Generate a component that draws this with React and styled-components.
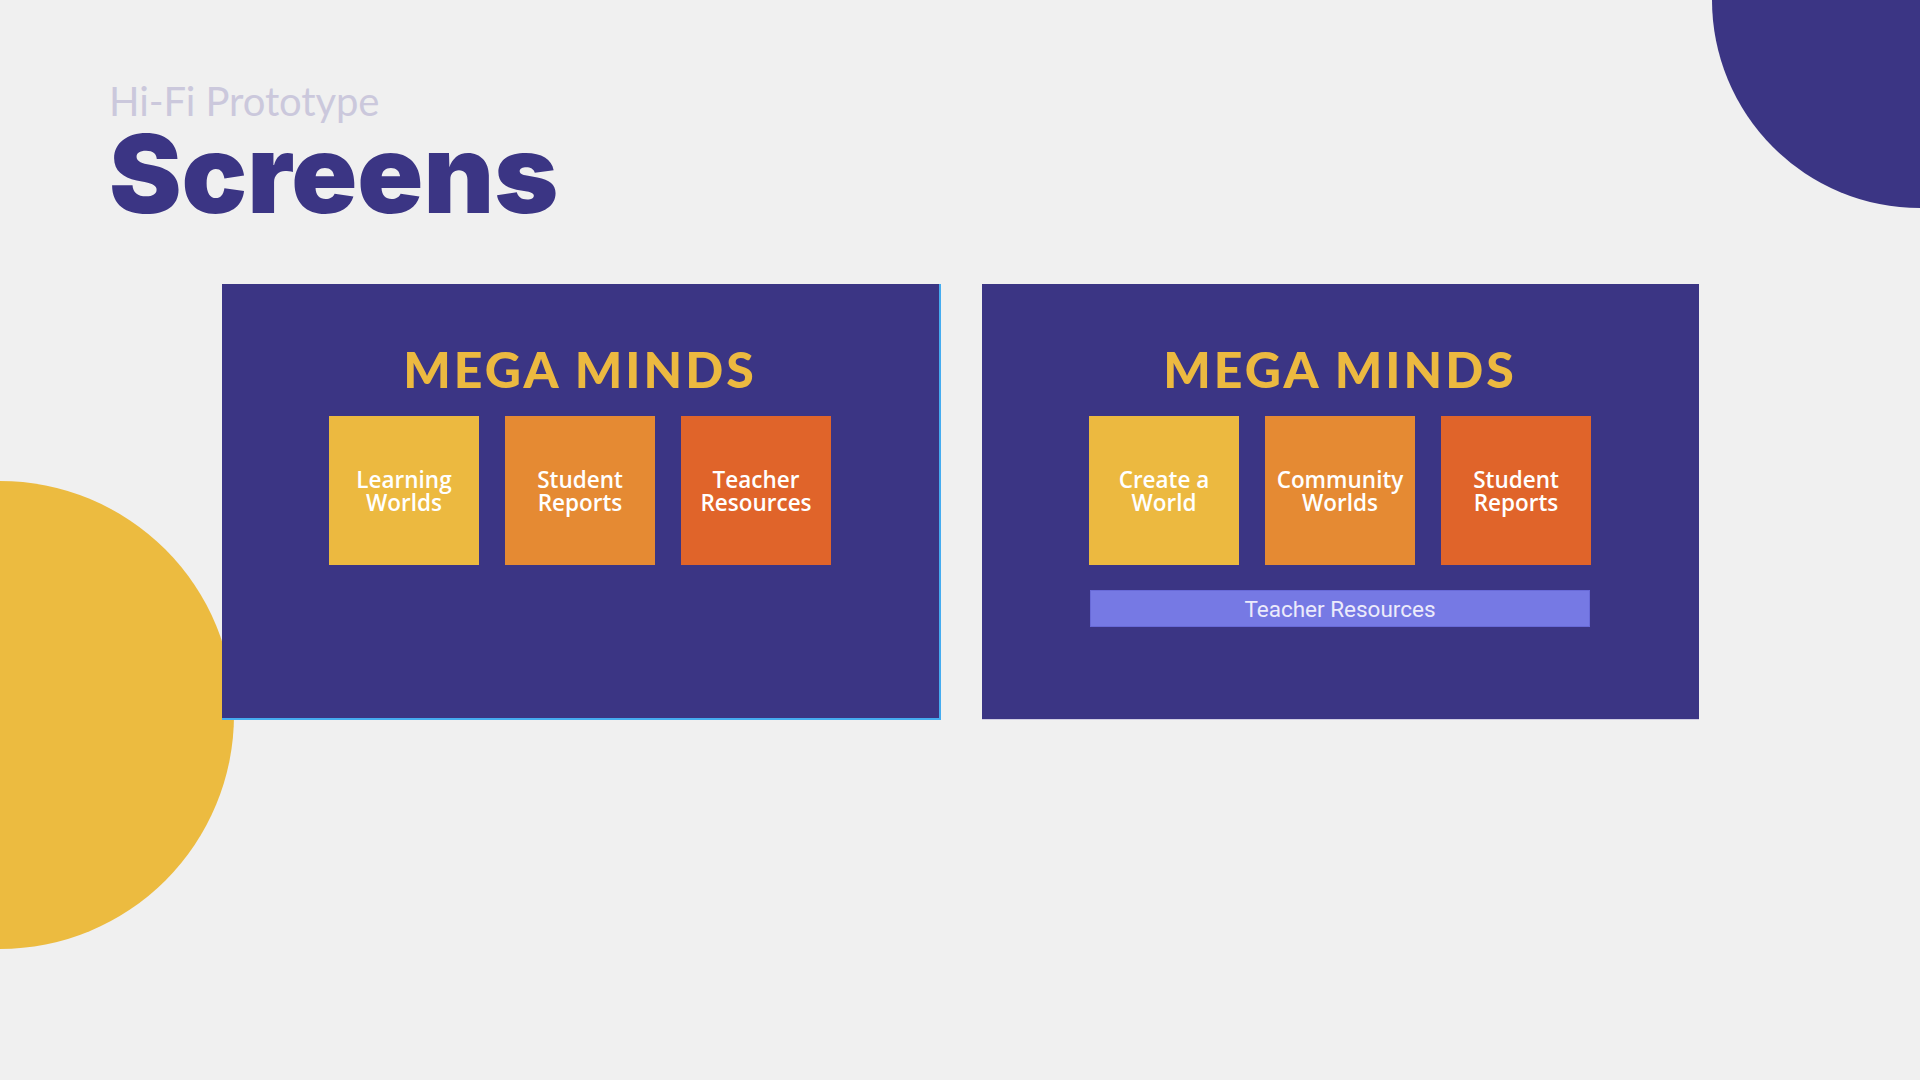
import React from "react"
import styled, { createGlobalStyle } from "styled-components"

const GlobalStyle = createGlobalStyle`
  html, body {
    margin: 0;
    padding: 0;
    background: #f0f0f0;
  }
`

const screens = [
  {
    tiles: [
      { label: "Learning Worlds", lines: ["Learning", "Worlds"] },
      { label: "Student Reports", lines: ["Student", "Reports"] },
      { label: "Teacher Resources", lines: ["Teacher", "Resources"] },
    ],
    selected: true,
  },
  {
    tiles: [
      { label: "Create a World", lines: ["Create a", "World"] },
      { label: "Community Worlds", lines: ["Community", "Worlds"] },
      { label: "Student Reports", lines: ["Student", "Reports"] },
    ],
    bar: "Teacher Resources",
  },
]

const tileColors = ["#ecb940", "#e58a33", "#e0642a"]

const App = () => {
  return (
    <>
      <GlobalStyle />
      <Page>
        <YellowBlob />
        <PurpleBlob />
        <Header>
          <Kicker>Hi-Fi Prototype</Kicker>
          <Title>Screens</Title>
        </Header>
        <CardRow>
          {screens.map((screen, i) => (
            <Card key={i} selected={screen.selected}>
              <Brand>MEGA MINDS</Brand>
              <TileRow>
                {screen.tiles.map((tile, j) => (
                  <Tile key={tile.label} color={tileColors[j]}>
                    {tile.lines.map(line => (
                      <span key={line}>{line}</span>
                    ))}
                  </Tile>
                ))}
              </TileRow>
              {screen.bar && <ResourceBar>{screen.bar}</ResourceBar>}
            </Card>
          ))}
        </CardRow>
      </Page>
    </>
  )
}

export default App

const Page = styled.div`
  position: relative;
  width: 1920px;
  height: 1080px;
  overflow: hidden;
  background: #f0f0f0;
`

const YellowBlob = styled.div`
  position: absolute;
  left: -234px;
  top: 481px;
  width: 468px;
  height: 468px;
  border-radius: 50%;
  background: #ecbb40;
`

const PurpleBlob = styled.div`
  position: absolute;
  left: 1712px;
  top: -208px;
  width: 416px;
  height: 416px;
  border-radius: 50%;
  background: #3b3584;
`

const Header = styled.div`
  position: relative;
  padding: 81px 0 0 109px;
`

const Kicker = styled.div`
  font-family: Lato, sans-serif;
  font-weight: 400;
  font-size: 40px;
  line-height: 40px;
  letter-spacing: -0.1px;
  color: #cbc8dc;
`

const Title = styled.h1`
  margin: 7px 0 0;
  font-family: Inter, sans-serif;
  font-weight: 900;
  font-size: 109px;
  line-height: 90px;
  letter-spacing: 0;
  color: #3b3584;
`

const CardRow = styled.div`
  position: relative;
  display: flex;
  justify-content: center;
  gap: 41px;
  margin-top: 66px;
`

const Card = styled.div`
  box-sizing: border-box;
  width: ${p => (p.selected ? "719px" : "717px")};
  height: 436px;
  padding-top: 60px;
  display: flex;
  flex-direction: column;
  align-items: center;
  background: #3b3584;
  border-right: ${p => (p.selected ? "2px solid #45acf0" : "none")};
  border-bottom: ${p => (p.selected ? "2px solid #45acf0" : "1px solid #cfcde2")};
`

const Brand = styled.div`
  font-family: Lato, sans-serif;
  font-weight: 900;
  font-size: 50px;
  line-height: 1;
  letter-spacing: 3px;
  color: #ecb940;
`

const TileRow = styled.div`
  display: flex;
  gap: 26px;
  margin-top: 22px;
`

const Tile = styled.div`
  width: 150px;
  height: 149px;
  display: flex;
  flex-direction: column;
  align-items: center;
  justify-content: center;
  background: ${p => p.color};
  font-family: "Open Sans", sans-serif;
  font-weight: 600;
  font-size: 22.5px;
  line-height: 23px;
  color: #ffffff;
  text-align: center;
`

const ResourceBar = styled.div`
  box-sizing: border-box;
  width: 500px;
  height: 37px;
  margin-top: 25px;
  display: flex;
  align-items: center;
  justify-content: center;
  background: #7679e4;
  border: 1px solid #686ad8;
  font-family: Roboto, sans-serif;
  font-size: 22.5px;
  color: #ecebfb;
`
